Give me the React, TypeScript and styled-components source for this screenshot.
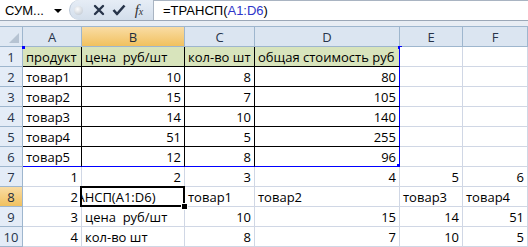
import styled, { createGlobalStyle, css } from "styled-components";

const GlobalStyle = createGlobalStyle`
    body {
        margin: 0;
        background: #fff;
        font-family: "Open Sans", "Liberation Sans", Arial, sans-serif;
    }
`;

const COLS = ["A", "B", "C", "D", "E", "F"];
const WIDTHS = [23, 59, 103, 70, 145, 63, 65];

type Value = string | number | null;

const rows: Value[][] = [
    ["продукт", "цена  руб/шт", "кол-во шт", "общая стоимость руб", null, null],
    ["товар1", 10, 8, 80, null, null],
    ["товар2", 15, 7, 105, null, null],
    ["товар3", 14, 10, 140, null, null],
    ["товар4", 51, 5, 255, null, null],
    ["товар5", 12, 8, 96, null, null],
    [1, 2, 3, 4, 5, 6],
    [2, "=ТРАНСП(A1:D6)", "товар1", "товар2", "товар3", "товар4"],
    [3, "цена  руб/шт", 10, 15, 14, 51],
    [4, "кол-во шт", 8, 7, 10, 5],
];

const Page = styled.div`
    width: 528px;
    height: 247px;
    overflow: hidden;
    background: #fff;
`;

const FormulaBar = styled.div`
    display: flex;
    height: 21px;
    box-sizing: border-box;
    border-bottom: 1px solid #9ba7b7;
    background: #fff;
    font-family: "Liberation Sans", Arial, sans-serif;
`;

const NameBox = styled.div`
    width: 69px;
    display: flex;
    align-items: center;
    justify-content: space-between;
    padding: 0 7px 0 5px;
    box-sizing: border-box;
    font-size: 13px;
    color: #000;
`;

const DropArrow = styled.span`
    width: 0;
    height: 0;
    border-left: 4px solid transparent;
    border-right: 4px solid transparent;
    border-top: 4px solid #000;
    margin-top: 1px;
`;

const IconStrip = styled.div`
    width: 84px;
    display: flex;
    align-items: center;
    background: linear-gradient(#e6edf6, #d3deeb);
    border-radius: 10px 0 0 10px;
    border-left: 1px solid #b9c6d6;
    box-sizing: border-box;
    padding-left: 4px;
`;

const Knob = styled.span`
    width: 9px;
    height: 9px;
    border-radius: 50%;
    background: radial-gradient(circle at 40% 35%, #fdfdfd, #b8c1cc);
    margin-right: 6px;
`;

const IconButton = styled.span`
    width: 20px;
    height: 20px;
    display: flex;
    align-items: center;
    justify-content: center;
`;

const Fx = styled.span`
    font-family: "Liberation Serif", "Times New Roman", serif;
    font-style: italic;
    font-size: 15px;
    color: #333;

    small {
        font-size: 10px;
    }
`;

const FormulaInput = styled.div`
    flex: 1;
    display: flex;
    align-items: center;
    padding-left: 9px;
    border-left: 1px solid #a9b4c2;
    border-top: 1px solid #a9b4c2;
    font-size: 13px;
    color: #000;
`;

const Ref = styled.span`
    color: #2e35c9;
`;

const Band = styled.div`
    height: 5px;
    background: #e8edf4;
`;

const Sheet = styled.div`
    display: grid;
    grid-template-columns: ${WIDTHS.map((w) => `${w}px`).join(" ")};
    grid-auto-rows: 20px;
    font-size: 13px;
    border-top: 1px solid #9eb6ce;
`;

const headerActive = css`
    background: linear-gradient(#f9dca4, #f1c15f);
    color: #1f2d3d;
`;

const Corner = styled.div`
    position: relative;
    background: #dfe8f3;
    border-right: 1px solid #9eb6ce;
    border-bottom: 1px solid #9eb6ce;
    box-sizing: border-box;

    &::after {
        content: "";
        position: absolute;
        right: 3px;
        bottom: 3px;
        width: 0;
        height: 0;
        border-left: 10px solid transparent;
        border-bottom: 10px solid #b6c3d2;
    }
`;

const ColHeader = styled.div<{ $active?: boolean }>`
    display: flex;
    align-items: center;
    justify-content: center;
    background: #dbe5f1;
    border-right: 1px solid #9eb6ce;
    border-bottom: 1px solid #9eb6ce;
    box-sizing: border-box;
    color: #27344a;
    font-size: 13px;
    ${(p) => p.$active && headerActive}
`;

const RowHeader = styled.div<{ $active?: boolean }>`
    display: flex;
    align-items: center;
    justify-content: center;
    background: #e4ecf7;
    border-right: 1px solid #9eb6ce;
    border-bottom: 1px solid #9eb6ce;
    box-sizing: border-box;
    color: #27344a;
    font-size: 13px;
    ${(p) => p.$active && headerActive}
`;

const Cell = styled.div<{
    $num?: boolean;
    $fill?: boolean;
    $boxed?: boolean;
    $blueRight?: boolean;
    $blueBottom?: boolean;
    $active?: boolean;
}>`
    position: relative;
    display: flex;
    align-items: center;
    justify-content: ${(p) => (p.$num ? "flex-end" : "flex-start")};
    padding: 1px 3px 0 3px;
    box-sizing: border-box;
    white-space: pre;
    color: #000;
    background: ${(p) => (p.$fill ? "#d8e4bc" : "#fff")};
    border-right: 1px solid ${(p) => (p.$blueRight ? "#0000ff" : p.$boxed ? "#000" : "#d0d7e5")};
    border-bottom: 1px solid ${(p) => (p.$blueBottom ? "#0000ff" : p.$boxed ? "#000" : "#d0d7e5")};
    z-index: ${(p) => (p.$active ? 2 : p.$num ? 0 : 1)};

    ${(p) =>
        p.$active &&
        css`
            &::before {
                content: "";
                position: absolute;
                inset: -1px -1px -1px -2px;
                border: 2px solid #000;
                pointer-events: none;
            }
        `}
`;

const Clip = styled.span`
    display: block;
    overflow: hidden;
    margin-left: -3px;
    width: calc(100% + 3px);
`;

const ClippedText = styled.span`
    display: inline-block;
    margin-left: -28px;
`;

const Handle = styled.span<{ $blue?: boolean }>`
    position: absolute;
    width: 5px;
    height: 5px;
    background: ${(p) => (p.$blue ? "#0000ff" : "#000")};
    border: ${(p) => (p.$blue ? "none" : "1px solid #fff")};
    z-index: 3;
`;

const TopLeftMark = styled(Handle)`
    left: -1px;
    top: -1px;
    width: 3px;
    height: 3px;
`;

const TopRightMark = styled(Handle)`
    right: -3px;
    top: -1px;
    width: 4px;
    height: 3px;
`;

const CornerMark = styled(Handle)`
    right: -3px;
    bottom: -3px;
`;

const FillHandle = styled(Handle)`
    right: -4px;
    bottom: -4px;
`;

const CancelIcon = () => (
    <svg width="12" height="12" viewBox="0 0 12 12">
        <path d="M2 2 L10 10 M10 2 L2 10" stroke="#27344a" strokeWidth="2.4" strokeLinecap="round" />
    </svg>
);

const EnterIcon = () => (
    <svg width="14" height="12" viewBox="0 0 14 12">
        <path d="M1.5 6 L5 10 L12.5 1.5" stroke="#27344a" strokeWidth="2.6" fill="none" strokeLinejoin="round" />
    </svg>
);

const App = () => {
    return (
        <Page>
            <GlobalStyle />
            <FormulaBar>
                <NameBox>
                    СУМ...
                    <DropArrow />
                </NameBox>
                <IconStrip>
                    <Knob />
                    <IconButton>
                        <CancelIcon />
                    </IconButton>
                    <IconButton>
                        <EnterIcon />
                    </IconButton>
                    <IconButton>
                        <Fx>
                            f<small>x</small>
                        </Fx>
                    </IconButton>
                </IconStrip>
                <FormulaInput>
                    =ТРАНСП(<Ref>A1:D6</Ref>)
                </FormulaInput>
            </FormulaBar>
            <Band />
            <Sheet>
                <Corner />
                {COLS.map((c) => (
                    <ColHeader key={c} $active={c === "B"}>
                        {c}
                    </ColHeader>
                ))}
                {rows.map((row, r) => {
                    const rowNo = r + 1;
                    return [
                        <RowHeader key={`h${rowNo}`} $active={rowNo === 8}>
                            {rowNo}
                        </RowHeader>,
                        ...row.map((v, c) => {
                            const inRange = rowNo <= 6 && c <= 3;
                            const active = rowNo === 8 && c === 1;
                            return (
                                <Cell
                                    key={`${rowNo}-${c}`}
                                    $num={typeof v === "number"}
                                    $fill={rowNo === 1 && c <= 3}
                                    $boxed={inRange}
                                    $blueRight={inRange && c === 3}
                                    $blueBottom={rowNo === 6 && c <= 3}
                                    $active={active}
                                >
                                    {active ? (
                                        <Clip>
                                            <ClippedText>{v}</ClippedText>
                                        </Clip>
                                    ) : (
                                        v
                                    )}
                                    {rowNo === 1 && c === 0 && <TopLeftMark $blue />}
                                    {rowNo === 1 && c === 3 && <TopRightMark $blue />}
                                    {rowNo === 6 && c === 3 && <CornerMark $blue />}
                                    {active && <FillHandle />}
                                </Cell>
                            );
                        }),
                    ];
                })}
            </Sheet>
        </Page>
    );
};

export default App;
